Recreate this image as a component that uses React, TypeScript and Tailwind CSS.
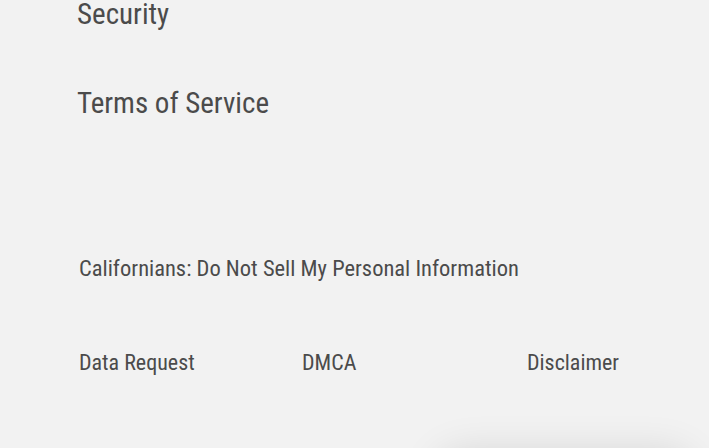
import React from "react";

export default function App() {
  return (
    <div className="relative h-[448px] w-[709px] overflow-hidden bg-[#f2f2f2] text-[#4b4b4b] font-stretch-condensed" style={{ fontFamily: "Roboto, 'Liberation Sans', sans-serif" }}>
      <div className="flex flex-col pl-[77px]">
        <div className="-mt-[8px] h-[44px] text-[29px] leading-[44px]">Security</div>
        <div className="mt-[45px] h-[44px] text-[29px] leading-[44px]">Terms of Service</div>
      </div>
      <div className="mt-[129px] pl-[79px] text-[22.5px] leading-[28px]">Californians: Do Not Sell My Personal Information</div>
      <div className="mt-[67px] grid grid-cols-[223px_225px_100px] pl-[79px] text-[22px] leading-[28px]">
        <div>Data Request</div>
        <div>DMCA</div>
        <div>Disclaimer</div>
      </div>
      <div className="absolute left-[435px] top-[452px] h-[60px] w-[260px] rounded-[30px] bg-white shadow-[0_0_40px_rgba(0,0,0,0.12)]"></div>
    </div>
  );
}
